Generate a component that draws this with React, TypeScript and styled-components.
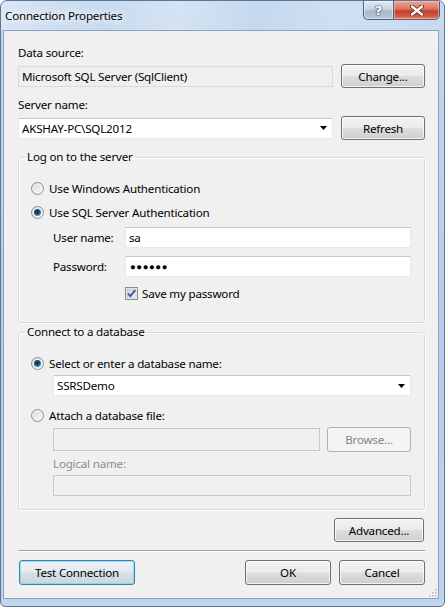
import React from "react";
import styled, { createGlobalStyle, css } from "styled-components";

const Global = createGlobalStyle`
  html, body { margin: 0; padding: 0; background: #fff; }
  body {
    width: 445px; height: 607px; overflow: hidden;
    font-family: "Noto Sans", "Open Sans", sans-serif;
    font-size: 11.6px; letter-spacing: -0.2px; color: #000;
  }
  * { box-sizing: border-box; }
`;

const Window = styled.div`
  width: 445px;
  height: 607px;
  display: flex;
  flex-direction: column;
  border: 1px solid #5d7494;
  border-radius: 7px 7px 5px 5px;
  background: linear-gradient(180deg, #c5d9ef 0%, #b5cde8 55%, #bfd5ed 100%);
  overflow: hidden;
`;

const TitleBar = styled.div`
  height: 29px;
  display: flex;
  align-items: flex-start;
  padding: 0 4px 0 4px;
  background: linear-gradient(100deg,
    rgba(255,255,255,0.35) 0%,
    rgba(255,255,255,0.05) 22%,
    rgba(255,255,255,0.28) 40%,
    rgba(255,255,255,0.0) 58%,
    rgba(255,255,255,0.18) 75%,
    rgba(255,255,255,0.05) 100%);
`;

const Title = styled.div`
  flex: 1;
  line-height: 29px;
  color: #000;
  text-shadow: 0 0 6px #fff, 0 0 10px #fff, 0 0 14px #fff;
`;

const Controls = styled.div`
  display: flex;
  margin-top: -1px;
`;

const CaptionButton = styled.div<{ $close?: boolean }>`
  height: 20px;
  display: flex;
  align-items: center;
  justify-content: center;
  border: 1px solid #4e5f74;
  ${(p) =>
    p.$close
      ? css`
          width: 47px;
          border-radius: 0 0 5px 0;
          background: linear-gradient(180deg, #e9a898 0%, #d9735f 45%, #c2402a 55%, #d65a40 85%, #e38a6e 100%);
          box-shadow: inset 0 0 0 1px rgba(255, 210, 200, 0.5);
        `
      : css`
          width: 30px;
          border-right: none;
          border-radius: 0 0 0 5px;
          background: linear-gradient(180deg, #e1e9f2 0%, #c8d4e2 45%, #a9b9cc 55%, #b7c6d8 100%);
          box-shadow: inset 0 0 0 1px rgba(255, 255, 255, 0.45);
        `}
`;

const HelpGlyph = styled.span`
  font-family: "DejaVu Sans", sans-serif;
  font-weight: bold;
  font-size: 13px;
  letter-spacing: 0;
  color: #fff;
  line-height: 1;
  text-shadow: 0 0 1px #3d4c5e, 0 0 1px #3d4c5e, 0 0 2px #3d4c5e;
`;

const Client = styled.div`
  position: relative;
  flex: 1;
  margin: 0 5px 7px 2px;
  border: 1px solid #8ea3ba;
  background: #f0f0f0;
  padding: 14px 13px 12px 14px;
  display: flex;
  flex-direction: column;
`;

const Label = styled.div<{ $disabled?: boolean; $gap?: number }>`
  line-height: 16px;
  height: 16px;
  white-space: nowrap;
  color: ${(p) => (p.$disabled ? "#8d8d8d" : "#000")};
  margin-top: ${(p) => p.$gap ?? 0}px;
`;

const FieldRow = styled.div<{ $gap?: number; $col?: number }>`
  display: grid;
  grid-template-columns: 1fr 84px;
  column-gap: ${(p) => p.$col ?? 8}px;
  align-items: center;
  margin-top: ${(p) => p.$gap ?? 3}px;
`;

const TextBox = styled.div<{ $kind?: "normal" | "readonly" | "disabled"; $h?: number; $gap?: number }>`
  position: relative;
  height: ${(p) => p.$h ?? 21}px;
  margin-top: ${(p) => p.$gap ?? 0}px;
  display: flex;
  align-items: center;
  padding: 0 3px;
  white-space: nowrap;
  ${(p) =>
    p.$kind === "readonly"
      ? css`
          background: #efefef;
          border: 1px solid #dadada;
        `
      : p.$kind === "disabled"
      ? css`
          background: #f0f0f0;
          border: 1px solid #c9c9c9;
        `
      : css`
          background: #fff;
          border: 1px solid #e3e9ef;
          border-top-color: #c5c9d0;
        `}
`;

const Dots = styled.span`
  font-size: 9.5px;
  letter-spacing: 0.6px;
  padding-left: 1px;
`;

const Arrow = styled.svg`
  position: absolute;
  right: 5px;
  top: 50%;
  margin-top: -2px;
`;

const Button = styled.button<{ $w?: number; $h?: number; $default?: boolean }>`
  width: ${(p) => p.$w ?? 84}px;
  height: ${(p) => p.$h ?? 24}px;
  padding: 0;
  font-family: inherit;
  font-size: 11.6px;
  letter-spacing: -0.2px;
  color: #000;
  border: 1px solid #707070;
  border-radius: 3px;
  background: linear-gradient(180deg, #f2f2f2 0%, #ebebeb 48%, #dddddd 52%, #cfcfcf 100%);
  box-shadow: inset 0 0 0 1px rgba(255, 255, 255, 0.75);
  ${(p) =>
    p.$default &&
    css`
      border-color: #3c7fb1;
      background: linear-gradient(180deg, #eef2f5 0%, #e4e9ee 48%, #d7dee5 52%, #ccd5de 100%);
      box-shadow: inset 0 0 0 1px rgba(95, 210, 245, 0.55);
    `}
  &:disabled {
    color: #838383;
    border-color: #adb2b5;
    background: #f4f4f4;
    box-shadow: none;
  }
`;

const Group = styled.fieldset<{ $gap: number; $pb: number }>`
  margin: ${(p) => p.$gap}px 0 0 0;
  padding: 14px 13px ${(p) => p.$pb}px 12px;
  border: 1px solid #d5dadf;
  border-radius: 3px;
  box-shadow: inset 1px 1px 0 #fff, 1px 1px 0 #fff;
  min-width: 0;
`;

const Legend = styled.legend`
  padding: 0 2px;
  margin-left: -6px;
  line-height: 16px;
`;

const OptionRow = styled.label<{ $gap?: number }>`
  display: flex;
  align-items: center;
  gap: 5px;
  height: 18px;
  margin-top: ${(p) => p.$gap ?? 0}px;
  white-space: nowrap;
`;

const Indent = styled.div`
  padding-left: 22px;
  display: flex;
  flex-direction: column;
`;

const CredGrid = styled.div`
  display: grid;
  grid-template-columns: 72px 1fr;
  row-gap: 8px;
  align-items: center;
  margin-top: 6px;
`;

const CheckRow = styled.label`
  display: flex;
  align-items: center;
  gap: 4px;
  height: 18px;
  margin: 7px 0 0 94px;
`;

const AdvancedRow = styled.div`
  display: flex;
  justify-content: flex-end;
  margin-top: 8px;
  padding-right: 1px;
`;

const Separator = styled.div`
  margin-top: 8px;
  border-top: 1px solid #a0a0a0;
  border-bottom: 1px solid #fff;
`;

const Footer = styled.div`
  display: flex;
  align-items: center;
  gap: 8px;
  margin-top: 8px;
  padding-left: 1px;
`;

const Spacer = styled.div`
  flex: 1;
`;

const Grip = styled.svg`
  position: absolute;
  right: 1px;
  bottom: 1px;
`;

const Radio = ({ checked }: { checked?: boolean }) => (
  <svg width="13" height="13" viewBox="0 0 13 13">
    <defs>
      <linearGradient id="rfill" x1="0" y1="0" x2="1" y2="1">
        <stop offset="0" stopColor="#d8d8d8" />
        <stop offset="1" stopColor="#fbfbfb" />
      </linearGradient>
      <radialGradient id="rdot" cx="0.45" cy="0.4" r="0.65">
        <stop offset="0" stopColor="#0f2c42" />
        <stop offset="0.55" stopColor="#1f5379" />
        <stop offset="1" stopColor="#6fc3ec" />
      </radialGradient>
    </defs>
    <circle cx="6.5" cy="6.5" r="6" fill="url(#rfill)" stroke="#8b8f94" />
    <circle cx="6.5" cy="6.5" r="4.4" fill="none" stroke="#f6f6f6" strokeWidth="0.8" />
    {checked && <circle cx="6.5" cy="6.5" r="3.6" fill="url(#rdot)" />}
  </svg>
);

const Check = () => (
  <svg width="13" height="13" viewBox="0 0 13 13">
    <defs>
      <linearGradient id="cfill" x1="0" y1="0" x2="1" y2="1">
        <stop offset="0" stopColor="#cbcfd5" />
        <stop offset="1" stopColor="#f4f6f8" />
      </linearGradient>
    </defs>
    <rect x="0.5" y="0.5" width="12" height="12" fill="#f4f4f4" stroke="#8e8f8f" />
    <rect x="2" y="2" width="9" height="9" fill="url(#cfill)" stroke="#b7bcc4" strokeWidth="0.6" />
    <path d="M3 6.6 L5.4 9.2 L10.2 3.2" fill="none" stroke="#3e54a0" strokeWidth="1.9" strokeLinejoin="round" />
  </svg>
);

const DropArrow = () => (
  <Arrow width="7" height="4" viewBox="0 0 7 4">
    <path d="M0 0 H7 L3.5 4 Z" fill="#000" />
  </Arrow>
);

export default function App() {
  return (
    <>
      <Global />
      <Window>
        <TitleBar>
          <Title>Connection Properties</Title>
          <Controls>
            <CaptionButton>
              <HelpGlyph>?</HelpGlyph>
            </CaptionButton>
            <CaptionButton $close>
              <svg width="14" height="11" viewBox="0 0 14 11">
                <path d="M2 1.5 L12 9.5 M12 1.5 L2 9.5" stroke="#5a2a20" strokeWidth="4" strokeLinecap="round" />
                <path d="M2 1.5 L12 9.5 M12 1.5 L2 9.5" stroke="#fff" strokeWidth="2.4" strokeLinecap="round" />
              </svg>
            </CaptionButton>
          </Controls>
        </TitleBar>
        <Client>
          <Label>Data source:</Label>
          <FieldRow>
            <TextBox $kind="readonly">Microsoft SQL Server (SqlClient)</TextBox>
            <Button>Change...</Button>
          </FieldRow>
          <Label $gap={9}>Server name:</Label>
          <FieldRow>
            <TextBox>
              AKSHAY-PC\SQL2012
              <DropArrow />
            </TextBox>
            <Button>Refresh</Button>
          </FieldRow>

          <Group $gap={9} $pb={20}>
            <Legend>Log on to the server</Legend>
            <OptionRow>
              <Radio />
              Use Windows Authentication
            </OptionRow>
            <OptionRow $gap={6}>
              <Radio checked />
              Use SQL Server Authentication
            </OptionRow>
            <Indent>
              <CredGrid>
                <Label>User name:</Label>
                <TextBox>sa</TextBox>
                <Label>Password:</Label>
                <TextBox>
                  <Dots>●●●●●●</Dots>
                </TextBox>
              </CredGrid>
            </Indent>
            <CheckRow>
              <Check />
              Save my password
            </CheckRow>
          </Group>

          <Group $gap={1} $pb={13}>
            <Legend>Connect to a database</Legend>
            <OptionRow>
              <Radio checked />
              Select or enter a database name:
            </OptionRow>
            <Indent>
              <TextBox $gap={3}>
                SSRSDemo
                <DropArrow />
              </TextBox>
            </Indent>
            <OptionRow $gap={10}>
              <Radio />
              Attach a database file:
            </OptionRow>
            <Indent>
              <FieldRow $col={7}>
                <TextBox $kind="disabled" $h={23} />
                <Button disabled $h={25}>Browse...</Button>
              </FieldRow>
              <Label $disabled $gap={4}>Logical name:</Label>
              <TextBox $kind="disabled" $gap={3} />
            </Indent>
          </Group>

          <AdvancedRow>
            <Button $w={90}>Advanced...</Button>
          </AdvancedRow>
          <Separator />
          <Footer>
            <Button $default $w={116} $h={25}>Test Connection</Button>
            <Spacer />
            <Button $w={86} $h={25}>OK</Button>
            <Button $w={86} $h={25}>Cancel</Button>
          </Footer>
          <Grip width="9" height="9" viewBox="0 0 9 9">
            {[
              [7, 1], [7, 4], [4, 4], [7, 7], [4, 7], [1, 7],
            ].map(([x, y]) => (
              <rect key={`${x}-${y}`} x={x} y={y} width="1.5" height="1.5" fill="#b8b8b8" />
            ))}
          </Grip>
        </Client>
      </Window>
    </>
  );
}
